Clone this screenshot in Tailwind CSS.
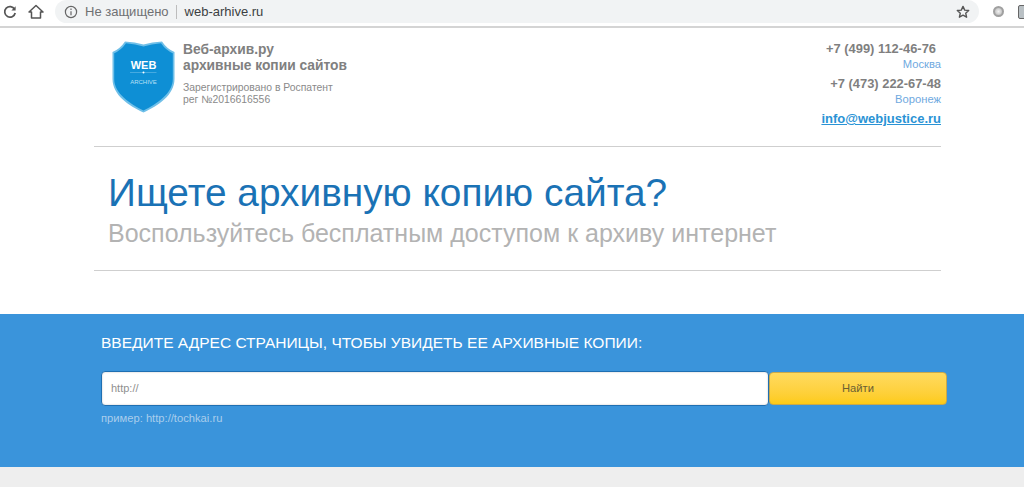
<!doctype html>
<html lang="ru"><head><meta charset="utf-8"><script src="https://cdn.jsdelivr.net/npm/@tailwindcss/browser@4"></script></head>
<body class="w-[1024px] h-[487px] overflow-hidden bg-[#eeeeee] font-['Liberation_Sans',Arial,sans-serif]">
<div class="h-[28px] bg-white border-b-2 border-[#d4d4d4] flex items-start">
  <div class="w-[55px] h-[23px] flex items-center pl-[3px] gap-[11px] shrink-0">
    <svg width="14" height="14" viewBox="0 0 14 14" fill="none" stroke="#555" stroke-width="1.7"><path d="M11.6 4.2A5.3 5.3 0 1 0 12.2 8"/><path d="M12.6 1.2v4.2H8.4z" fill="#555" stroke="none"/></svg>
    <svg width="16" height="15" viewBox="0 0 16 15" fill="none" stroke="#555" stroke-width="1.5"><path d="M1 8l7-6.5L15 8h-2.5v6h-9V8z" stroke-linejoin="round"/></svg>
  </div>
  <div class="w-[924px] h-[23px] rounded-[12px] bg-[#f1f3f4] flex items-center pl-[9px] pr-[9px] text-[13px] shrink-0">
    <svg width="14" height="14" viewBox="0 0 14 14" fill="none" stroke="#666" stroke-width="1.2"><circle cx="7" cy="7" r="5.6"/><path d="M7 6.2v4M7 3.6v1.4"/></svg>
    <span class="ml-[7px] text-[#6f7072] leading-none">Не защищено</span>
    <span class="ml-[7px] w-px h-[14px] bg-[#bdbdbd]"></span>
    <span class="ml-[8px] text-[#3c3f42] leading-none">web-arhive.ru</span>
    <svg class="ml-auto" width="14" height="14" viewBox="0 0 14 14" fill="none" stroke="#555" stroke-width="1.4"><path d="M7 1.4l1.7 3.7 4 .4-3 2.7.9 4L7 10.2l-3.6 2 .9-4-3-2.7 4-.4z" stroke-linejoin="round"/></svg>
  </div>
  <div class="flex-1 h-[23px] flex items-center pl-[14px] gap-[14px] overflow-hidden">
    <span class="w-[11px] h-[11px] rounded-full bg-radial from-[#f2f2f2] to-[#b5b5b5] border-2 border-[#a0a0a0] shrink-0"></span>
    <span class="w-[10px] h-[14px] rounded-[2px] bg-[#b9c0c4] border border-[#666] shrink-0"></span>
  </div>
</div>

<div class="h-[286px] bg-white">
  <div class="ml-[94px] w-[847px]">
    <div class="h-[119px] border-b border-[#cfcfcf] flex justify-between">
      <div class="flex pt-[13px] pl-[18px]">
        <svg width="63" height="72" viewBox="0 0 63 72" class="shrink-0">
          <path d="M0.500 11Q8 8 13 0.500Q23 1 31.500 3.500Q40 1 50 0.500Q55 8 62.500 11V38C62.500 54 46 65 31.500 71.500C17 65 0.500 54 0.500 38Z" fill="#6fbfe8"/>
          <path d="M2.200 12.200Q9 9.500 14 2.300Q23.500 3 31.500 5.500Q39.500 3 49 2.300Q54 9.500 60.800 12.200V38C60.800 52.500 44.500 63 31.500 69.500C18.500 63 2.200 52.500 2.200 38Z" fill="#0e8fd5"/>
          <path d="M18 31.500H44.500" stroke="#5db6e6" stroke-width=".7"/><circle cx="31.500" cy="31.500" r="1" fill="#fff"/>
          <text x="31.500" y="28" text-anchor="middle" font-size="11" font-weight="700" fill="#fff" font-family="Liberation Sans">WEB</text>
          <text x="31.500" y="42.500" text-anchor="middle" font-size="6" fill="#b9e0f5" font-family="Liberation Sans">ARCHIVE</text>
        </svg>
        <div class="ml-[8px] pt-[1px]">
          <div class="text-[13.800px] leading-[16px] font-bold text-[#808080]">Веб-архив.ру<br>архивные копии сайтов</div>
          <div class="mt-[8px] text-[10.400px] leading-[12px] text-[#8a8a8a]">Зарегистрировано в Роспатент<br>рег №2016616556</div>
        </div>
      </div>
      <div class="pt-[13px] text-right">
        <div class="text-[12.900px] leading-[16px] font-bold text-[#7f7f7f] pr-[5px]">+7 (499) 112-46-76</div>
        <div class="text-[11.200px] leading-[14px] text-[#6fa9e0]">Москва</div>
        <div class="text-[12.900px] leading-[16px] font-bold text-[#7f7f7f] mt-[5px]">+7 (473) 222-67-48</div>
        <div class="text-[11.200px] leading-[14px] text-[#6fa9e0]">Воронеж</div>
        <a class="block text-[13px] leading-[16px] font-bold text-[#2a93d5] underline mt-[5px]">info@webjustice.ru</a>
      </div>
    </div>
    <div class="h-[124px] border-b border-[#cfcfcf] pl-[14px] pt-[23px]">
      <h1 class="text-[38.800px] leading-[46px] font-normal text-[#1a72b5]">Ищете архивную копию сайта?</h1>
      <p class="text-[25.030px] leading-[30px] mt-[2px] text-[#b3b3b3]">Воспользуйтесь бесплатным доступом к архиву интернет</p>
    </div>
  </div>
</div>

<div class="h-[153px] bg-[#3a94db] pl-[101px] pt-[20px]">
  <h2 class="text-[15.520px] leading-[17px] font-normal text-white">ВВЕДИТЕ АДРЕС СТРАНИЦЫ, ЧТОБЫ УВИДЕТЬ ЕЕ АРХИВНЫЕ КОПИИ:</h2>
  <div class="flex items-center mt-[20px] w-[846px]">
    <div class="w-[668px] h-[35px] rounded-[4px] bg-white border border-[#1f6fb2] flex items-center pl-[9px] text-[11px] text-[#8f8f8f] shadow-[inset_0_0_2px_rgba(0,0,0,0.25)]">http://</div>
    <button class="w-[178px] h-[33px] rounded-[4px] bg-linear-to-b from-[#ffda5e] to-[#fdcb14] border border-[#c9a94a] text-[11.200px] text-[#6b6033]">Найти</button>
  </div>
  <div class="mt-[6px] text-[11.200px] leading-[13px] text-[#a9cdec]">пример: http://tochkai.ru</div>
</div>
</body></html>
